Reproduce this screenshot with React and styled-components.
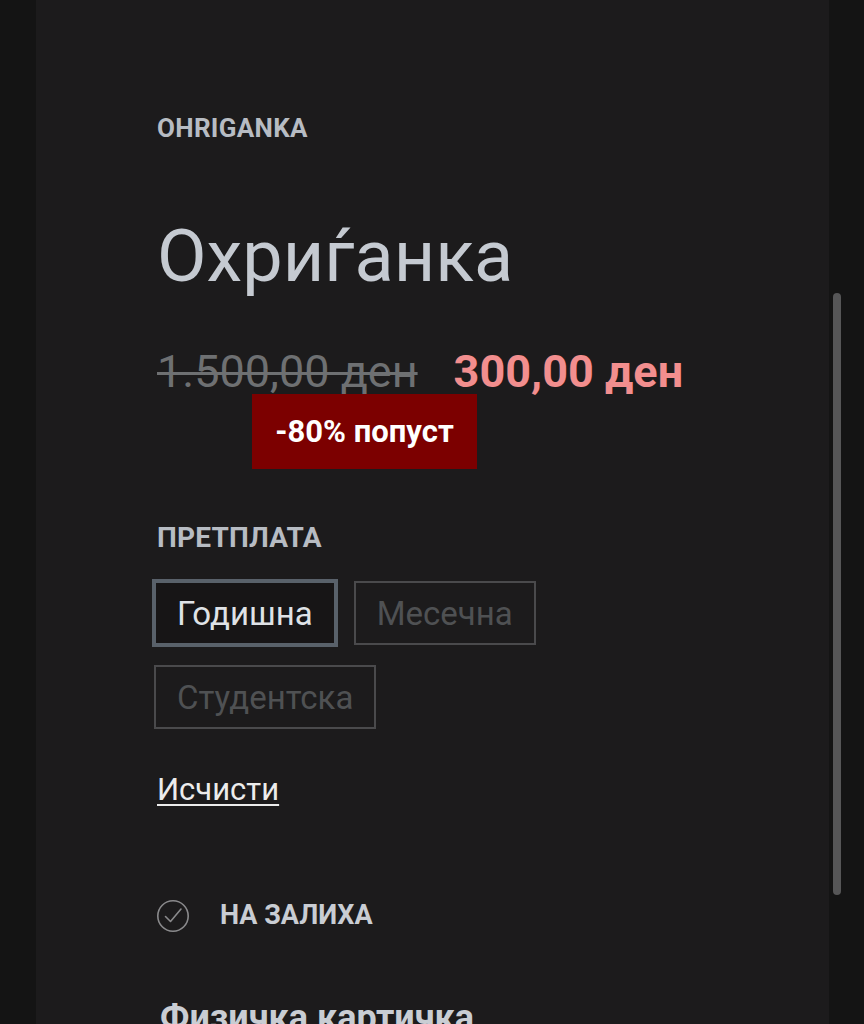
import React from "react"
import styled, { createGlobalStyle } from "styled-components"

const GlobalStyle = createGlobalStyle`
  html, body {
    margin: 0;
    padding: 0;
    background: #141414;
    font-family: Roboto, "Noto Sans", sans-serif;
  }
`

const Page = styled.div`
  min-height: 1024px;
  padding: 0 35px 0 36px;
  overflow: hidden;
`

const Panel = styled.div`
  background: #1c1b1c;
  min-height: 1024px;
  padding: 115px 0 0 121px;
  box-sizing: border-box;
`

const Brand = styled.div`
  font-size: 26px;
  line-height: 1;
  font-weight: 700;
  color: #b7bcc3;
  letter-spacing: 0.3px;
`

const Title = styled.h1`
  margin: 80px 0 0;
  font-size: 72px;
  line-height: 1;
  font-weight: 400;
  color: #c5cad1;
`

const PriceRow = styled.div`
  margin-top: 57px;
  display: flex;
  align-items: baseline;
  gap: 36px;
  font-size: 45px;
  line-height: 44px;
`

const OldPrice = styled.del`
  color: #6e7072;
  text-decoration-thickness: 3px;
`

const NewPrice = styled.span`
  color: #f28e8e;
  font-weight: 700;
`

const Badge = styled.div`
  margin-left: 95px;
  width: 225px;
  height: 75px;
  display: flex;
  align-items: center;
  justify-content: center;
  background: #7c0000;
  color: #ffffff;
  font-size: 31px;
  font-weight: 700;
`

const Label = styled.div`
  margin-top: 55px;
  font-size: 28px;
  line-height: 1;
  font-weight: 700;
  color: #b7bcc3;
  letter-spacing: 0.2px;
`

const Options = styled.div`
  margin-top: 29px;
  margin-left: -3px;
  display: flex;
  flex-wrap: wrap;
  gap: 20px 18px;
  width: 430px;
`

const Option = styled.button`
  height: 64px;
  padding: 0 21px;
  border: 2px solid ${p => (p.$active ? "#59616a" : "#4a4a4c")};
  box-shadow: ${p => (p.$active ? "0 0 0 2px #59616a" : "none")};
  background: ${p => (p.$active ? "#171516" : "transparent")};
  color: ${p => (p.$active ? "#dfe2e6" : "#4f5153")};
  font-family: inherit;
  font-size: 33px;
  font-weight: 400;
  box-sizing: border-box;
`

const Clear = styled.a`
  display: inline-block;
  margin-top: 45px;
  font-size: 31px;
  line-height: 1;
  color: #ececec;
  text-decoration: underline;
  text-underline-offset: 4px;
  text-decoration-thickness: 2px;
`

const Stock = styled.div`
  margin-top: 97px;
  display: flex;
  align-items: center;
  gap: 31px;
  height: 27px;
`

const StockText = styled.span`
  font-size: 27px;
  line-height: 1;
  font-weight: 700;
  color: #c9cdd3;
`

const Format = styled.h2`
  margin: 71px 0 0 3px;
  font-size: 36px;
  line-height: 1;
  font-weight: 700;
  color: #c9cdd3;
`

const ScrollThumb = styled.div`
  position: fixed;
  top: 293px;
  right: 23px;
  width: 8px;
  height: 602px;
  border-radius: 4px;
  background: #565657;
`

function CheckCircle() {
  return (
    <svg width="32" height="34" viewBox="0 0 32 34" fill="none">
      <circle cx="16" cy="17" r="15.2" stroke="#8a8a8c" strokeWidth="1.6" />
      <path d="M8.5 17.5 L13.5 22.5 L24 10" stroke="#8a8a8c" strokeWidth="1.6" strokeLinecap="round" strokeLinejoin="round" />
    </svg>
  )
}

const plans = ["Годишна", "Месечна", "Студентска"]

export default function App() {
  return (
    <>
      <GlobalStyle />
      <Page>
        <Panel>
          <Brand>OHRIGANKA</Brand>
          <Title>Охриѓанка</Title>
          <PriceRow>
            <OldPrice>1.500,00 ден</OldPrice>
            <NewPrice>300,00 ден</NewPrice>
          </PriceRow>
          <Badge>-80% попуст</Badge>
          <Label>ПРЕТПЛАТА</Label>
          <Options>
            {plans.map((plan, i) => (
              <Option key={plan} $active={i === 0}>
                {plan}
              </Option>
            ))}
          </Options>
          <Clear>Исчисти</Clear>
          <Stock>
            <CheckCircle />
            <StockText>НА ЗАЛИХА</StockText>
          </Stock>
          <Format>Физичка картичка</Format>
        </Panel>
      </Page>
      <ScrollThumb />
    </>
  )
}
